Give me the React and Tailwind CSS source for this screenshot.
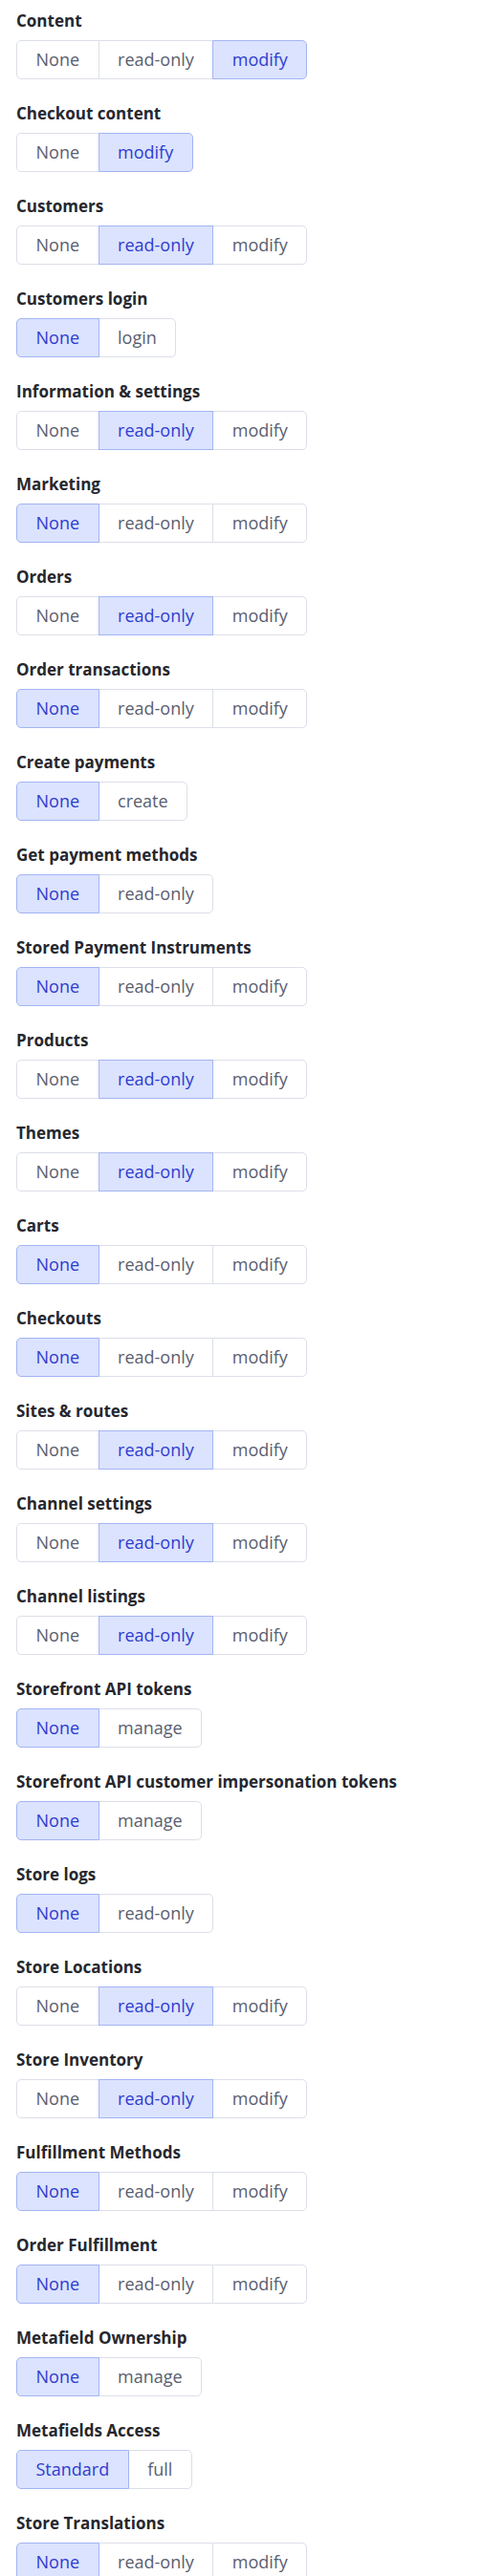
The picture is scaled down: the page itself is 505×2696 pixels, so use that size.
import React from "react";

const scopes = [
  { label: "Content", options: ["None", "read-only", "modify"], value: "modify" },
  { label: "Checkout content", options: ["None", "modify"], value: "modify" },
  { label: "Customers", options: ["None", "read-only", "modify"], value: "read-only" },
  { label: "Customers login", options: ["None", "login"], value: "None" },
  { label: "Information & settings", options: ["None", "read-only", "modify"], value: "read-only" },
  { label: "Marketing", options: ["None", "read-only", "modify"], value: "None" },
  { label: "Orders", options: ["None", "read-only", "modify"], value: "read-only" },
  { label: "Order transactions", options: ["None", "read-only", "modify"], value: "None" },
  { label: "Create payments", options: ["None", "create"], value: "None" },
  { label: "Get payment methods", options: ["None", "read-only"], value: "None" },
  { label: "Stored Payment Instruments", options: ["None", "read-only", "modify"], value: "None" },
  { label: "Products", options: ["None", "read-only", "modify"], value: "read-only" },
  { label: "Themes", options: ["None", "read-only", "modify"], value: "read-only" },
  { label: "Carts", options: ["None", "read-only", "modify"], value: "None" },
  { label: "Checkouts", options: ["None", "read-only", "modify"], value: "None" },
  { label: "Sites & routes", options: ["None", "read-only", "modify"], value: "read-only" },
  { label: "Channel settings", options: ["None", "read-only", "modify"], value: "read-only" },
  { label: "Channel listings", options: ["None", "read-only", "modify"], value: "read-only" },
  { label: "Storefront API tokens", options: ["None", "manage"], value: "None" },
  { label: "Storefront API customer impersonation tokens", options: ["None", "manage"], value: "None" },
  { label: "Store logs", options: ["None", "read-only"], value: "None" },
  { label: "Store Locations", options: ["None", "read-only", "modify"], value: "read-only" },
  { label: "Store Inventory", options: ["None", "read-only", "modify"], value: "read-only" },
  { label: "Fulfillment Methods", options: ["None", "read-only", "modify"], value: "None" },
  { label: "Order Fulfillment", options: ["None", "read-only", "modify"], value: "None" },
  { label: "Metafield Ownership", options: ["None", "manage"], value: "None" },
  { label: "Metafields Access", options: ["Standard", "full"], value: "Standard" },
  { label: "Store Translations", options: ["None", "read-only", "modify"], value: "None" },
];

// one scope row: bold label + segmented picker
const ScopeGroup = ({ label, options, value }) => (
  <div className="flex flex-col">
    <div className="text-[17px] leading-[24px] font-bold text-[#26272e] mb-[8px]">{label}</div>
    <div className="flex">
      {options.map((opt, i) => {
        const selected = opt === value;
        const first = i === 0;
        const last = i === options.length - 1;
        return (
          <button
            key={opt}
            className={
              "h-[41px] px-[19.5px] text-[18px] border " +
              (first ? "rounded-l-[5px] " : "-ml-px ") +
              (last ? "rounded-r-[5px] " : "") +
              (selected
                ? "bg-[#dbe3fe] border-[#a3b4f3] text-[#2f3ccf] relative z-10"
                : "bg-white border-[#dcdfe8] text-[#5a5e70]")
            }
          >
            {opt}
          </button>
        );
      })}
    </div>
  </div>
);

export default function App() {
  return (
    <div
      className="bg-white px-[17px] pt-[10px] pb-4 flex flex-col gap-[24px]"
      style={{ fontFamily: '"Open Sans", sans-serif' }}
    >
      {scopes.map((s) => (
        <ScopeGroup key={s.label} {...s} />
      ))}
    </div>
  );
}
